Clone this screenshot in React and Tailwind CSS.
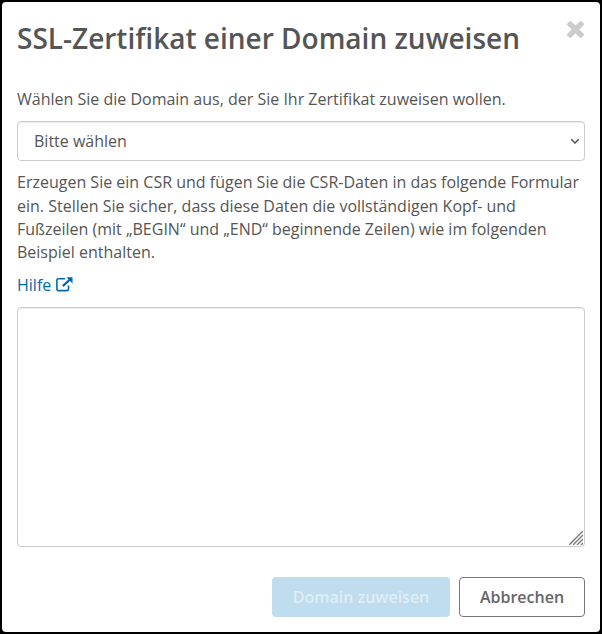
export default function App() {

    return (

        <div className="w-[602px] h-[634px] bg-black p-0.5 font-['Open_Sans',sans-serif] text-base text-[#555]">

            <div className="h-full bg-white rounded px-[15px] flex flex-col">

                {/* HEADER */}

                <div className="flex justify-between items-start pt-[17px]">

                    <h2 className="text-[28px] leading-[38px] font-semibold">
                        SSL-Zertifikat einer Domain zuweisen
                    </h2>

                    <button type="button" aria-label="Schließen" className="mt-0.5 mr-px text-[#ccc]">
                        <CloseIcon />
                    </button>

                </div>

                {/* DOMAIN */}

                <p className="mt-[30px] leading-6">
                    Wählen Sie die Domain aus, der Sie Ihr Zertifikat zuweisen wollen.
                </p>

                <div className="relative mt-2.5 shrink-0">

                    <select className="block w-full h-10 px-4 appearance-none bg-white border border-[#ccc] rounded shadow-[inset_0_1px_1px_rgba(0,0,0,0.075)]">
                        <option>Bitte wählen</option>
                    </select>

                    <svg className="absolute right-[5px] top-[17px] w-[10px] h-[7px] pointer-events-none" viewBox="0 0 10 7" fill="none" stroke="#555" strokeWidth="1.5">
                        <path d="M1.2 1.2L5 5l3.8-3.8" />
                    </svg>

                </div>

                {/* CSR */}

                <p className="mt-[10.4px] leading-[23.2px]">
                    Erzeugen Sie ein CSR und fügen Sie die CSR-Daten in das folgende Formular
                    ein. Stellen Sie sicher, dass diese Daten die vollständigen Kopf- und
                    Fußzeilen (mit „BEGIN“ und „END“ beginnende Zeilen) wie im folgenden
                    Beispiel enthalten.
                </p>

                <a href="#" className="mt-[9.8px] self-start flex items-center gap-[5px] leading-[23px] text-[#0069aa]">
                    Hilfe
                    <ExternalLinkIcon />
                </a>

                <div className="relative mt-[10px] shrink-0">

                    <textarea className="block w-full h-60 resize-none border border-[#ccc] rounded shadow-[inset_0_1px_1px_rgba(0,0,0,0.075)]" />

                    <svg className="absolute right-0.5 bottom-0.5 size-[14px] pointer-events-none" viewBox="0 0 14 14" stroke="#777" strokeWidth="1.4">
                        <path d="M0 14L14 0M4 14L14 4M8 14l6-6M12 14l2-2" />
                    </svg>

                </div>

                {/* BUTTONS */}

                <div className="mt-[29.8px] flex justify-end gap-[9px] font-semibold">

                    <button type="button" disabled className="w-[178px] h-10 rounded bg-[#bfddee] text-[#dfeef7]">
                        Domain zuweisen
                    </button>

                    <button type="button" className="w-[126px] h-10 rounded border border-[#777] text-[#666]">
                        Abbrechen
                    </button>

                </div>

            </div>

        </div>
    )
}



function CloseIcon() {

    return (

        <svg className="w-[17px] h-[17px]" viewBox="302 366 1188 1188" fill="currentColor">
            <path d="M1490 1322q0 40-28 68l-136 136q-28 28-68 28t-68-28l-294-294-294 294q-28 28-68 28t-68-28l-136-136q-28-28-28-68t28-68l294-294-294-294q-28-28-28-68t28-68l136-136q28-28 68-28t68 28l294 294 294-294q28-28 68-28t68 28l136 136q28 28 28 68t-28 68l-294 294 294 294q28 28 28 68z" />
        </svg>

    )
}



function ExternalLinkIcon() {

    return (

        <svg className="w-[17px] h-[15px] mb-0.5" viewBox="0 0 17 15" fill="none" stroke="currentColor">
            <path strokeWidth="1.6" d="M9 1.8H2.2Q.9 1.8 .9 3.1v9.2q0 1.3 1.3 1.3h9q1.3 0 1.3-1.3V8.5" />
            <path strokeWidth="2.3" d="M6.8 9.2L14.5 2" />
            <path stroke="none" fill="currentColor" d="M10.5 .2h6v6.3z" />
        </svg>

    )
}
